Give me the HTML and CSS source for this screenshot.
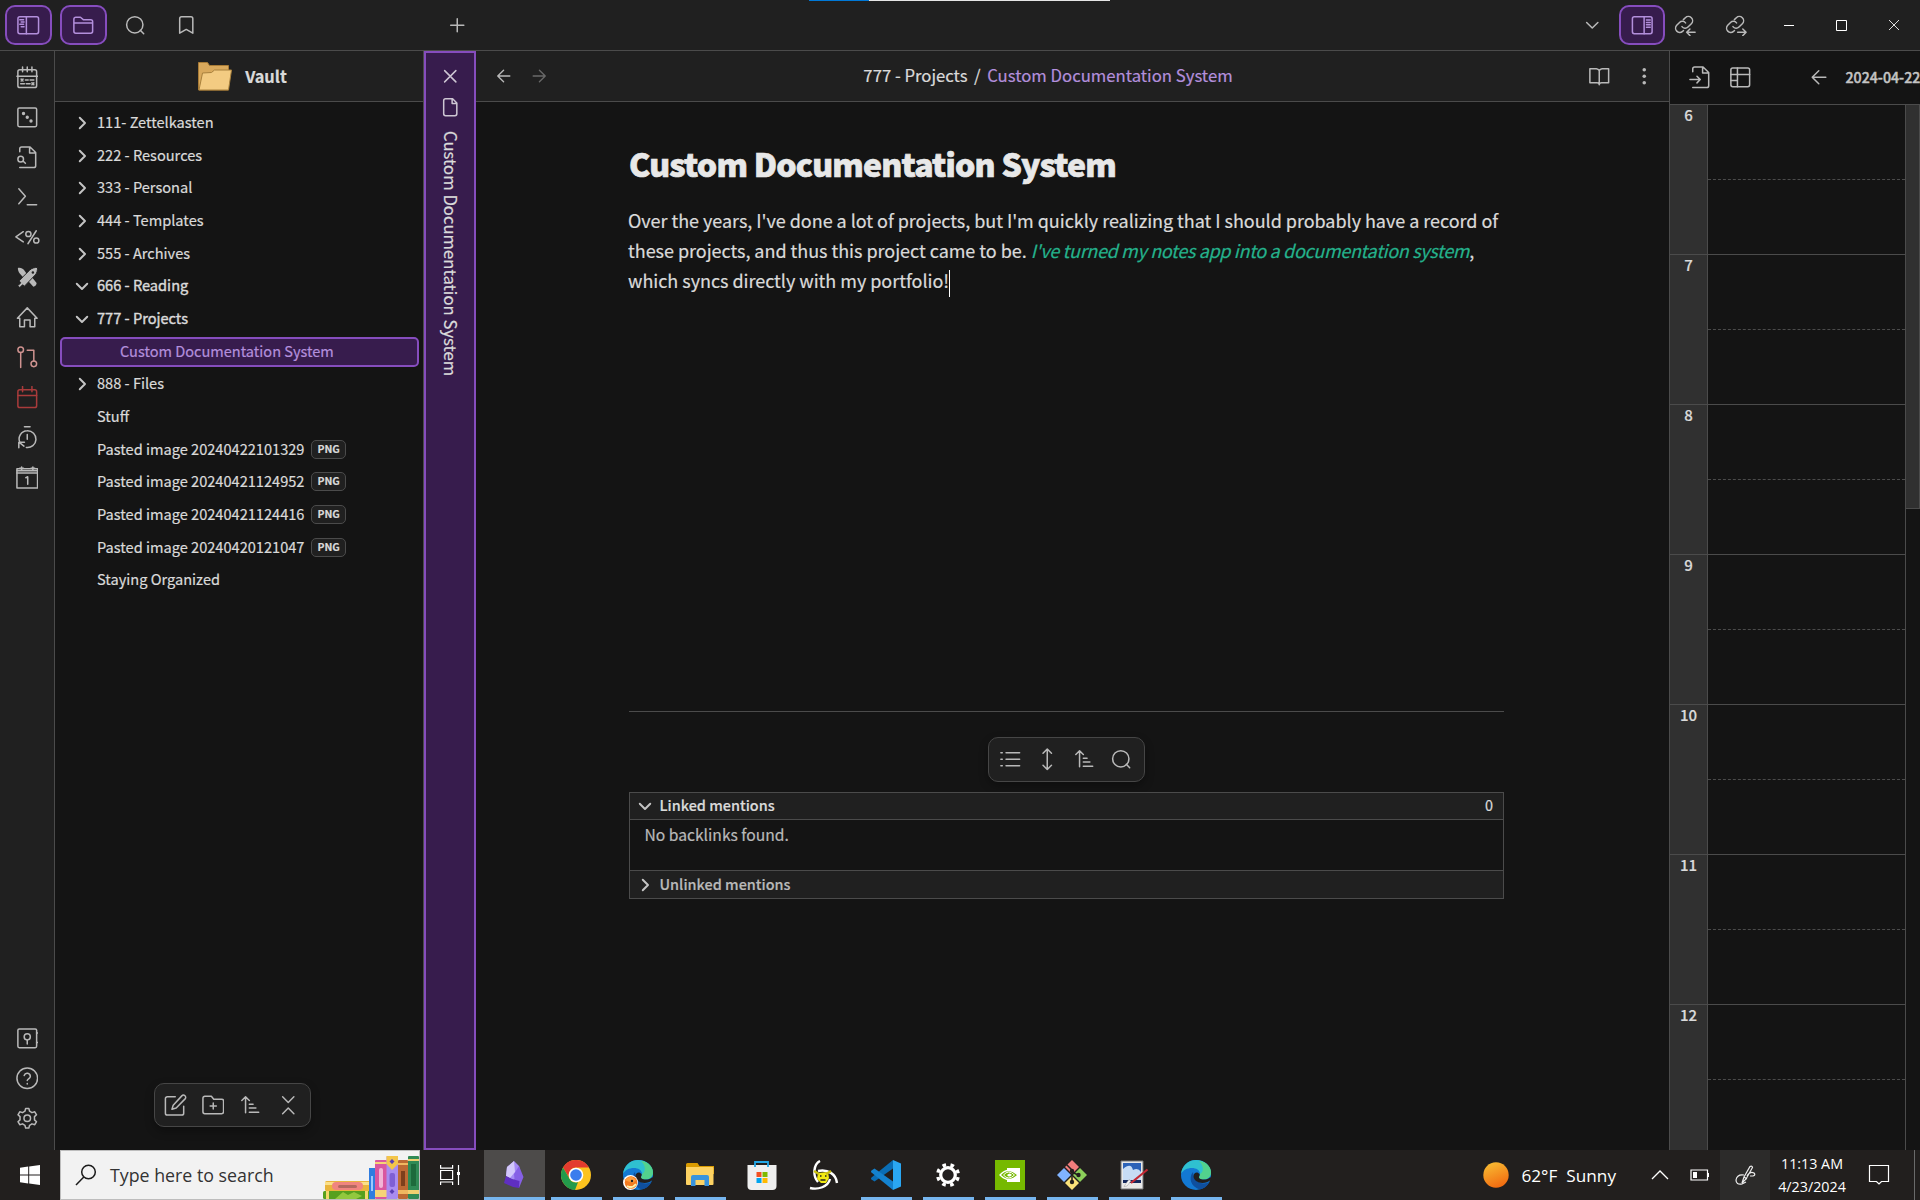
FILE: index.html
```html
<!DOCTYPE html>
<html lang="en">
<head>
<meta charset="utf-8">
<title>Custom Documentation System</title>
<link rel="stylesheet" href="styles.css">
</head>
<body>
<svg class="sprite" aria-hidden="true">
  <symbol id="search" viewBox="0 0 24 24"><circle cx="11.5" cy="11.5" r="8.7"/><path d="m21 21-3.6-3.6"/></symbol>
  <symbol id="left" viewBox="0 0 24 24"><path d="M19 12H4.500M11.500 5l-7 7 7 7"/></symbol>
  <symbol id="right" viewBox="0 0 24 24"><path d="M5 12h14.500M12.500 5l7 7-7 7"/></symbol>
  <symbol id="chev" viewBox="0 0 24 24"><path d="m9 5 7 7-7 7"/></symbol>
  <symbol id="sort" viewBox="0 0 24 24"><path d="M7 20V3M3 7l4-4 4 4M11 11h4M11 15h7M11 19.500h10"/></symbol>
</svg>

<div class="app">
  <header class="titlebar">
    <div class="tab-icons">
      <span class="pill"><svg class="i" viewBox="0 0 24 24"><rect x="1" y="3" width="22" height="18" rx="2"/><path d="M10 3v18M3 6h4M4.500 8.500h3M3 11h4M4.500 13.500h3"/></svg></span>
      <span class="pill"><svg class="i" viewBox="0 0 24 24"><path d="M2 9.500h20M4 20.500h16a2 2 0 0 0 2-2V8a2 2 0 0 0-2-2h-8L9 3.500H4a2 2 0 0 0-2 2v13a2 2 0 0 0 2 2Z"/></svg></span>
      <span class="ti"><svg class="i"><use href="#search"/></svg></span>
      <span class="ti"><svg class="i" viewBox="0 0 24 24"><path d="M19 20.500l-7-4-7 4V5a2 2 0 0 1 2-2h10a2 2 0 0 1 2 2z"/></svg></span>
    </div>
    <svg class="i plus" viewBox="0 0 24 24"><path d="M5 12h14M12 5v14"/></svg>
    <div class="notch"></div>
    <div class="win-icons">
      <span class="w-chev"><svg class="i" viewBox="0 0 24 24"><path d="m6 9 6 6 6-6"/></svg></span>
      <span class="pill pill-r"><svg class="i" viewBox="0 0 24 24"><rect x="1.500" y="3" width="21" height="18" rx="2"/><path d="M14 3v18M16.500 6.500h4M16.500 9h4M16.500 11.500h4M16.500 14h4"/></svg></span>
      <span class="w-link"><svg class="i" viewBox="0 0 24 24"><path d="M8.500 13.500a4.200 4.200 0 0 0 6.400.4l3.600-3.600a4.500 4.500 0 0 0-6.400-6.400L10 6"/><path d="M12.300 9.500a4.200 4.200 0 0 0-6.400-.4l-3 3a4.500 4.500 0 0 0 6.200 6.500l1-1M22.500 19.500h-9M17 16l-3.500 3.500L17 23"/></svg></span>
      <span class="w-link2"><svg class="i" viewBox="0 0 24 24"><path d="M8.500 13.500a4.200 4.200 0 0 0 6.400.4l3.600-3.600a4.500 4.500 0 0 0-6.400-6.400L10 6"/><path d="M12.300 9.500a4.200 4.200 0 0 0-6.400-.4l-3 3a4.500 4.500 0 0 0 6.200 6.500l1-1M13.500 19.500h9M19 16l3.500 3.500L19 23"/></svg></span>
      <span class="win"><svg width="12" height="12" viewBox="0 0 12 12"><path d="M1 6.500h10" stroke="#fff"/></svg></span>
      <span class="win"><svg width="12" height="12" viewBox="0 0 12 12"><path d="M1.500 1.500h10v10h-10z" stroke="#fff"/></svg></span>
      <span class="win"><svg width="12" height="12" viewBox="0 0 12 12"><path d="m1 1 10 10M11 1 1 11" stroke="#ddd"/></svg></span>
    </div>
  </header>

  <div class="workspace">
    <nav class="ribbon">
      <div class="rib">
        <span><svg class="i" viewBox="0 0 24 24"><rect x="2" y="4" width="20" height="19" rx="2"/><path d="M7 1v5M12 1v5M17 1v5M1 11h22M5.500 14l2 2M7.500 14l-2 2M10 15h3M15 15h4M5 19h4M11 19h4M17 18l2 2M19 18l-2 2"/></svg></span>
        <span><svg class="i" viewBox="0 0 24 24"><rect x="2" y="2" width="20" height="20" rx="1.500"/><g fill="currentColor"><circle cx="8" cy="8" r="1"/><circle cx="12" cy="12" r="1"/><circle cx="16" cy="16" r="1"/></g></svg></span>
        <span><svg class="i" viewBox="0 0 24 24"><path d="M4 6V3a2 2 0 0 1 2-2h9l6 6v14a2 2 0 0 1-2 2H4M14.500 1v6.500H21"/><circle cx="5" cy="14" r="3"/><path d="m8 16.500 2 2"/></svg></span>
        <span><svg class="i" viewBox="0 0 24 24"><path d="m3 3 7 8-7 8M12 20h10"/></svg></span>
        <span><svg class="i tall" viewBox="0 0 28 24"><path d="M10 6 2 11.500 10 17M24 5 15 19"/><circle cx="15.500" cy="8.500" r="2.800"/><circle cx="24" cy="15.500" r="2.800"/></svg></span>
        <span><svg class="i solid" viewBox="0 0 24 24"><path d="M2 2c3.500-.5 6 1 7.500 3.500L12 9l-3.500 4L4 8C2.500 6 2 4 2 2zM13 16l4-4 5 6c0 2-1.500 3.500-3.500 4z"/><path d="M15 4c2-2 5-2.500 8-2.500 0 3-.5 6-2.500 8L9 21.500 7 20l-3 3-2-2 3-3-1.500-2z" stroke="#202020" stroke-width="1"/><circle cx="18" cy="7" r="1.300" fill="#202020"/></svg></span>
        <span><svg class="i" viewBox="0 0 24 24"><path d="M1.500 13 12 2l10.500 11H20v9h-5v-7H9v7H4v-9z"/></svg></span>
        <span class="pink"><svg class="i" viewBox="0 0 24 24"><circle cx="5" cy="4" r="3"/><circle cx="19" cy="19" r="3"/><path d="M5 7v16M12 4.500h7V16"/></svg></span>
        <span class="red"><svg class="i" viewBox="0 0 24 24"><rect x="2" y="4" width="20" height="19" rx="2"/><path d="M7 .5V6M17 .5V6M2 10h20"/></svg></span>
        <span><svg class="i" viewBox="0 0 24 24"><path d="M9 .8h6M12 9v5M4.500 18A8.700 8.700 0 0 1 12 5a9 9 0 1 1-1 17.900M3 23.200v-6h6M3.500 17.500l5 4"/></svg></span>
        <span><svg class="i" viewBox="0 0 24 24"><rect x="1" y="3" width="22" height="20.500"/><path d="M1 7.500h22M6 1v4M18 1v4M4 2.500h4M16 2.500h4M1 5h22M10.500 12.500l2-1v8"/></svg></span>
      </div>
      <div class="rib">
        <span><svg class="i" viewBox="0 0 24 24"><rect x="2" y="2" width="20" height="20" rx="1.500"/><circle cx="12" cy="10.500" r="3.300"/><path d="M12 14v4M23.200 6.500H22M23.200 16.500H22"/></svg></span>
        <span><svg class="i" viewBox="0 0 24 24"><circle cx="12" cy="12" r="11"/><path d="M8.700 9a3.400 3.400 0 0 1 6.600 1c0 2.300-3.300 2.700-3.300 4.300M12 17.500v.5"/></svg></span>
        <span><svg class="i" viewBox="0 0 24 24"><circle cx="12" cy="12" r="3.500"/><path d="M9.500 4.500 10.300 1.500h3.400l.8 3L17 6l3-.9 1.900 3.200-2.200 2v3.400l2.200 2-1.900 3.200L17 18l-2.500 1.500-.8 3h-3.400l-.8-3L7 18l-3 .9-1.900-3.200 2.200-2v-3.400l-2.200-2L4 5.100 7 6z"/></svg></span>
      </div>
    </nav>

    <aside class="sidebar">
      <div class="vault-head">
        <svg width="34" height="29" viewBox="0 0 34 29"><path d="M.5 28V.5h9l2 3h19V28z" fill="#d9a95c" stroke="#a87b36"/><path d="m1 28 3.500-17 9-.5 3-2.500H33.500L30.500 28z" fill="#f3cb82" stroke="#a8803c"/></svg>
        <span>Vault</span>
      </div>
      <div class="tree">
        <div class="row"><svg class="c"><use href="#chev"/></svg><span>111- Zettelkasten</span></div>
        <div class="row"><svg class="c"><use href="#chev"/></svg><span>222 - Resources</span></div>
        <div class="row"><svg class="c"><use href="#chev"/></svg><span>333 - Personal</span></div>
        <div class="row"><svg class="c"><use href="#chev"/></svg><span>444 - Templates</span></div>
        <div class="row"><svg class="c"><use href="#chev"/></svg><span>555 - Archives</span></div>
        <div class="row open"><svg class="c down"><use href="#chev"/></svg><span>666 - Reading</span></div>
        <div class="row open"><svg class="c down"><use href="#chev"/></svg><span>777 - Projects</span></div>
        <div class="row active"><span>Custom Documentation System</span></div>
        <div class="row"><svg class="c"><use href="#chev"/></svg><span>888 - Files</span></div>
        <div class="row leaf"><span>Stuff</span></div>
        <div class="row leaf"><span>Pasted image 20240422101329</span><b>PNG</b></div>
        <div class="row leaf"><span>Pasted image 20240421124952</span><b>PNG</b></div>
        <div class="row leaf"><span>Pasted image 20240421124416</span><b>PNG</b></div>
        <div class="row leaf"><span>Pasted image 20240420121047</span><b>PNG</b></div>
        <div class="row leaf"><span>Staying Organized</span></div>
      </div>
      <div class="toolbar side-tools">
        <svg class="i" viewBox="0 0 24 24"><path d="M12 3H3.500a2 2 0 0 0-2 2v15.500a2 2 0 0 0 2 2H19a2 2 0 0 0 2-2V13M19 2a2.300 2.300 0 0 1 3.500 3.200L13 15l-4.500 1.300L9.800 12z"/></svg>
        <svg class="i" viewBox="0 0 24 24"><path d="M12 9.500v6.500M8.700 12.800h6.600M3 21h18a2 2 0 0 0 2-2V7.500a2 2 0 0 0-2-2h-8.500L10 2.500H3a2 2 0 0 0-2 2V19a2 2 0 0 0 2 2Z"/></svg>
        <svg class="i"><use href="#sort"/></svg>
        <svg class="i" viewBox="0 0 24 24"><path d="m6 3 6 6 6-6M6 21l6-6 6 6"/></svg>
      </div>
    </aside>

    <section class="stacked-tab">
      <svg class="i" viewBox="0 0 24 24"><path d="m6 6 12 12M18 6 6 18"/></svg>
      <svg class="i file" viewBox="0 0 24 24"><path d="M14.500 3H7a2 2 0 0 0-2 2v14a2 2 0 0 0 2 2h10a2 2 0 0 0 2-2V7.500zM14 3v5h5"/></svg>
      <span>Custom Documentation System</span>
    </section>

    <main class="note">
      <div class="note-head">
        <div class="nav"><svg class="i s"><use href="#left"/></svg><svg class="i s dim"><use href="#right"/></svg></div>
        <div class="crumbs"><span>777 - Projects</span><i>/</i><em>Custom Documentation System</em></div>
        <div class="acts">
          <svg class="i" viewBox="0 0 24 24"><path d="M12 6v15M12 6a4 4 0 0 0-3-2H2v15h7.500c1.500 0 2.500 1 2.500 2 0-1 1-2 2.500-2H22V4h-7a4 4 0 0 0-3 2z"/></svg>
          <svg class="i solid" viewBox="0 0 24 24"><circle cx="12" cy="5" r="1.900"/><circle cx="12" cy="12" r="1.900"/><circle cx="12" cy="19" r="1.900"/></svg>
        </div>
      </div>
      <div class="doc">
        <h1>Custom Documentation System</h1>
        <div class="para">
          <div>Over the years, I've done a lot of projects, but I'm quickly realizing that I should probably have a record of</div>
          <div>these projects, and thus this project came to be. <em>I've turned my notes app into a documentation system</em>,</div>
          <div>which syncs directly with my portfolio!<i class="caret"></i></div>
        </div>
        <div class="backlinks">
          <div class="toolbar main-tools">
            <svg class="i" viewBox="0 0 24 24"><path d="M7.500 5H22M7.500 12H22M7.500 19H22M2 5h1.500M2 12h1.500M2 19h1.500"/></svg>
            <svg class="i" viewBox="0 0 24 24"><path d="M12 1v22M7.500 5.500 12 1l4.500 4.500M7.500 18.500 12 23l4.500-4.500"/></svg>
            <svg class="i"><use href="#sort"/></svg>
            <svg class="i"><use href="#search"/></svg>
          </div>
          <div class="mentions">
            <div class="mh on"><svg class="c down"><use href="#chev"/></svg><span>Linked mentions</span><u>0</u></div>
            <div class="mb">No backlinks found.</div>
            <div class="mh"><svg class="c"><use href="#chev"/></svg><span>Unlinked mentions</span></div>
          </div>
        </div>
      </div>
    </main>

    <aside class="planner">
      <div class="plan-head">
        <svg class="i" viewBox="0 0 24 24"><path d="M4 6V3a2 2 0 0 1 2-2h9l6 6v14a2 2 0 0 1-2 2H4M14.500 1v6.500H21M1 14.500h11M8.500 11l3.500 3.500L8.500 18"/></svg>
        <svg class="i" viewBox="0 0 24 24"><rect x="2" y="2" width="20" height="20" rx="2"/><path d="M9 2v20M2 9h20M2 15.500h7"/></svg>
        <svg class="i la"><use href="#left"/></svg>
        <span>2024-04-22</span>
      </div>
      <div class="plan-body">
        <div class="hours">
          <div class="hr"><b>6</b><i></i></div><div class="hr"><b>7</b><i></i></div><div class="hr"><b>8</b><i></i></div><div class="hr"><b>9</b><i></i></div><div class="hr"><b>10</b><i></i></div><div class="hr"><b>11</b><i></i></div><div class="hr"><b>12</b><i></i></div>
        </div>
        <div class="scroll"><div class="thumb"></div></div>
      </div>
    </aside>
  </div>

  <footer class="taskbar">
    <div class="start"><svg width="20" height="20" viewBox="0 0 20 20"><path fill="#fff" d="M0 2.700 8.200 1.600v7.900H0zM9.200 1.400 20 0v9.500H9.200zM0 10.500h8.200v7.900L0 17.300zM9.200 10.500H20V20L9.200 18.600z"/></svg></div>
    <div class="searchbox">
      <svg width="22" height="22" viewBox="0 0 22 22" fill="none" stroke="#1b1b1b" stroke-width="1.500"><circle cx="13.500" cy="8" r="6.800"/><path d="M8.800 13 1 21"/></svg>
      <span>Type here to search</span>
      <svg class="books" width="96" height="43" viewBox="0 0 96 43">
        <rect x="2" y="25" width="45" height="10" rx="1.500" fill="#e9b53c"/><rect x="2" y="26" width="45" height="3" fill="#fbe08a"/><rect x="9" y="26" width="31" height="8" rx="4" fill="#f0857f"/><rect x="15" y="29" width="19" height="3" rx="1.500" fill="#b5685f"/>
        <rect y="35" width="47" height="8" rx="1.500" fill="#56a01e"/><path d="M3 35h3v8H3zM42 35h3v8h-3z" fill="#f2d86a"/><path d="m12 43 8-7 5 3 6-3 8 4-6 3z" fill="#92c83e"/>
        <rect x="46" y="12" width="6" height="31" fill="#2f7de0"/><rect x="48" y="20" width="2" height="15" fill="#9cc8ff"/>
        <rect x="52" y="4" width="12" height="39" rx="1" fill="#d9579f"/><path d="M52 6h12v2H52zM52 34h12v7H52z" fill="#f6d377"/><rect x="56" y="12" width="4" height="20" rx="2" fill="#f2b4d6"/>
        <rect x="63.500" width="11.500" height="43" rx="1" fill="#a98cf0"/><path d="M63.500 0H75v8l-6 6-5.500-6z" fill="#f3c54a"/><path d="m69 3 2.500 2.500L69 8l-2.500-2.500zM69 33l2.500 2.500L69 38l-2.500-2.500z" fill="#5b3fb5"/><rect x="66.500" y="17" width="5.500" height="14" rx="2" fill="#7f5fd4"/>
        <rect x="75" y="4" width="10" height="39" rx="1" fill="#bd6a34"/><path d="M75 7h10v2H75zM75 34h10v4H75z" fill="#f0b860"/><rect x="78" y="15" width="4" height="15" fill="#7d3f1c"/>
        <rect x="85" width="11" height="43" rx="1" fill="#2f8a55"/><path d="M85 3h11v2H85zM85 34h11v4H85z" fill="#f0d070"/><rect x="88" y="8" width="5" height="22" fill="#1d6a3c"/>
      </svg>
    </div>
    <div class="taskview"><svg width="20" height="20" viewBox="0 0 20 20" fill="none" stroke="#fff" stroke-width="1.200"><path d="M.6 0v3.200h12V0M.6 5.500h12v9H.6zM.6 20v-3h12v3M18.500 0v20"/><path d="M17 7h3v3h-3z" fill="#fff" stroke="none"/></svg></div>
    <div class="apps">
      <div class="app-i cur run"><svg width="22" height="28" viewBox="0 0 22 28"><path d="M11 0 4 6l-1 9 7 4 9-2-3-12z" fill="#a58af5"/><path d="M11 0 4 6l-1 9 4 2 5-6z" fill="#d3c8fb"/><path d="m16 5 4.500 11L16 27l-4-4-1-10z" fill="#8660e6"/><path d="M3 15 1 22l9 4 6 1 .5-7L9 18z" fill="#5f2fc0"/></svg></div>
      <div class="app-i run"><svg width="30" height="30" viewBox="0 0 30 30"><circle cx="15" cy="15" r="15" fill="#fcc31e"/><path d="M2 7.500A15 15 0 0 1 28 7.500H15A7.500 7.500 0 0 0 8.500 18.500z" fill="#e33b2e"/><path d="M2 7.500 8.500 18.700A7.500 7.500 0 0 0 17 22.200L14 30A15 15 0 0 1 2 7.500z" fill="#239a4b"/><circle cx="15" cy="15" r="7.300" fill="#fff"/><circle cx="15" cy="15" r="5.800" fill="#3b7ded"/></svg></div>
      <div class="app-i run"><svg width="30" height="30" viewBox="0 0 30 30"><use href="#edge"/><circle cx="7.500" cy="22.500" r="7.500" fill="#fff"/><circle cx="8" cy="22.500" r="6.300" fill="#f47b20"/><path d="m1 20 7-4 5 4-3 3z" fill="#ff9d3c"/><circle cx="9" cy="21" r="1.200" fill="#222"/><path d="M4 26q5 3 9-2" stroke="#fff1a8" stroke-width="2" fill="none"/></svg></div>
      <div class="app-i run"><svg width="28" height="24" viewBox="0 0 28 24"><path d="M0 1.500Q0 0 1.500 0h10l2 3H28v8H0z" fill="#d99a00"/><path d="M0 4h26.500q1 0 1 1v16q0 1-1 1H1q-1 0-1-1z" fill="#fdd263"/><path d="M5 23V14q0-2 2-2h14q2 0 2 2v9h-4.500v-6h-9v6z" fill="#3a94dc"/></svg></div>
      <div class="app-i"><svg width="30" height="30" viewBox="0 0 30 30"><path d="M8 5.500V2h13v3.500" fill="none" stroke="#23a6e6" stroke-width="1.800"/><path d="M.5 5h29v21q0 4-4 4h-21q-4 0-4-4z" fill="#efefef"/><path d="M8 5v2M21 5v2" stroke="#23a6e6" stroke-width="1.800"/><path d="M9.500 12h5v5h-5z" fill="#f25022"/><path d="M15.500 12h5v5h-5z" fill="#7fba00"/><path d="M9.500 18h5v5h-5z" fill="#00a4ef"/><path d="M15.500 18h5v5h-5z" fill="#ffb900"/></svg></div>
      <div class="app-i"><svg width="30" height="30" viewBox="0 0 30 30" fill="none" stroke="#fff" stroke-width="2.400"><path d="M11 1C5 4 3 15 9 22M28 23C27 14 19 9 9 11M1 28C9 30 19 27 21 19"/><path d="m9 13 10-1 1 6-3 5h-5l-4-4z" fill="#f2ea12" stroke="none"/><path d="m5 11 5 3M22 11l-5 3" stroke="#c9c010"/><path d="M11 16h1.500M16 16h1.500M11.500 20h5" stroke="#222" stroke-width="1.500"/></svg></div>
      <div class="app-i run"><svg width="30" height="30" viewBox="0 0 30 30"><path d="M22 0 30 3.500v23L22 30z" fill="#2aa7f3"/><path d="M22 0v8.500L3.500 21.500.5 19.500q-1-1 0-2z" fill="#0a6db5"/><path d="M22 30v-8.500L3.500 8.500l-3 2q-1 1 0 2z" fill="#1482cf"/></svg></div>
      <div class="app-i run"><svg width="24" height="24" viewBox="0 0 24 24" fill="none" stroke="#fff"><circle cx="12" cy="12" r="7.300" stroke-width="3.200"/><circle cx="12" cy="12" r="10.300" stroke-width="3.400" stroke-dasharray="3.600 4.490" stroke-dashoffset="-2.200"/></svg></div>
      <div class="app-i run"><svg width="30" height="30" viewBox="0 0 30 30"><path d="M0 0h30v30H0z" fill="#76b900"/><path d="M12 8h13v14H12z" fill="#fff"/><path d="M5 15q8-9 18 0-9 9-18 0z" fill="#76b900" stroke="#fff" stroke-width="1.300"/><path d="M8.500 15q5-6 11 0-6 6-11 0z" fill="#76b900" stroke="#fff"/><path d="M12 15q3-3 5 0-3 3-5 0z" fill="#fff"/></svg></div>
      <div class="app-i run"><svg width="30" height="30" viewBox="0 0 30 30"><path d="m15 0 7 7-7 7-7-7z" fill="#f27d7d"/><path d="m7 8 7 7-7 7-7-7z" fill="#80b3ff"/><path d="m23 8 7 7-7 7-7-7z" fill="#8ccf5a"/><path d="m15 16 7 7-7 7-7-7z" fill="#fbe27a"/><path d="m9 4 6 6v12M15 12l6 3" stroke="#231f1e" stroke-width="1.500" fill="none"/><circle cx="15" cy="11" r="2.200" fill="#231f1e"/><circle cx="21.500" cy="15" r="2.200" fill="#231f1e"/><circle cx="15" cy="22" r="2.200" fill="#231f1e"/></svg></div>
      <div class="app-i run pair"><svg width="30" height="30" viewBox="0 0 30 30"><path d="M2 1h22v28H2z" fill="#e8e8e8" stroke="#777"/><path d="M4 3h18v20H4z" fill="#2c62b8"/><path d="M4 9q8-7 10 1 5-3 8 2v8H4z" fill="#c7dcf5"/><path d="M4 20h18v3H4z" fill="#14285c"/><path d="M28.500 9.500 12 23" stroke="#c42834" stroke-width="2.200"/><path d="m12 21-4 5-3 .5 2-3 3-4z" fill="#f5f5f5" stroke="#999" stroke-width=".5"/></svg></div>
      <div class="app-i run"><svg width="30" height="30" viewBox="0 0 30 30"><g id="edge"><circle cx="15" cy="15" r="15" fill="#1379d3"/><path d="M0 14C1 6 7 0 15 0c9 0 15 6 15 12.500 0 4-3 7-7.500 7-3 0-4.500-1-4.500-2s1-1.500 1-3.500C19 10 15 8 11 8 6 8 2 10 0 14z" fill="#2fc0d0"/><path d="M18 1c8 1 12 6.500 12 11.500 0 4-3 7-7.500 7-3 0-4.500-1-4.500-2s1-1.500 1-3.500c4-2 4-8-1-13z" fill="#5bd67c" opacity=".8"/><path d="M12 12c-5 6-2 15 7 17.500 4-1 7.500-3.500 9.500-7.500-5 3-16 2-16.500-10z" fill="#0f4f9e"/><path d="M18.500 14c-2-3-6-1.500-6 2 0 4 4 7 9 7 3 0 6-1 8-3l1-1-1-2c-3 3-7 3-10 2-1.500-.5-1.500-1.500-1.500-2 0-1 1-1.500.5-3z" fill="#221f1e"/></g></svg></div>
    </div>
    <div class="tray">
      <svg width="26" height="26" viewBox="0 0 26 26"><defs><linearGradient id="sun" x1=".2" y1="0" x2=".6" y2="1"><stop offset="0" stop-color="#f8bd33"/><stop offset="1" stop-color="#f26a10"/></linearGradient></defs><circle cx="13" cy="13" r="12.700" fill="url(#sun)"/></svg>
      <span class="wx">62°F</span><span class="wx2">Sunny</span>
      <svg class="up" width="18" height="10" viewBox="0 0 18 10"><path d="m1 9 8-8 8 8" fill="none" stroke="#fff" stroke-width="1.300"/></svg>
      <svg class="bat" width="20" height="12" viewBox="0 0 20 12"><path d="M1 1h16.500v10H1z" fill="none" stroke="#fff" stroke-width="1.200"/><path d="M3 3h4v6H3zM17.500 4h1.500v4h-1.500z" fill="#fff"/></svg>
      <div class="pen"><svg width="21" height="21" viewBox="0 0 21 21" fill="none" stroke="#eee" stroke-width="1.200"><path d="M7 18 9 12 15 1.500q2-1 2.500 1L11 14zM12 11q3-5 7-3 2 2-1 3h-3M9 10q-7-1-8 5 0 5 6 4l4-2M9 12l3 2"/></svg></div>
      <div class="clock"><span>11:13 AM</span><span>4/23/2024</span></div>
      <svg class="chat" width="22" height="22" viewBox="0 0 22 22"><path d="M1.500 1.500h19v16h-7l-2.500 2.500-2.500-2.500h-7z" fill="none" stroke="#fff" stroke-width="1.200"/></svg>
      <div class="peek"></div>
    </div>
  </footer>
</div>
</body>
</html>
```
FILE: styles.css
```css
* { box-sizing: border-box; }
body { margin: 0; background: #141414; color: #dadada; font-family: "Noto Sans CJK SC", "Noto Sans", sans-serif; overflow: hidden; -webkit-text-stroke: .2px currentColor; }
.sprite { position: absolute; width: 0; height: 0; }
.app { width: 1920px; height: 1200px; display: flex; flex-direction: column; }
.i { width: 22.5px; height: 22.5px; fill: none; stroke: currentColor; stroke-width: 1.6; stroke-linecap: round; stroke-linejoin: round; color: #b9b9b9; flex: none; }
.i.solid { fill: currentColor; stroke: none; }
.i.tall { width: 26px; }
.c { width: 18px; height: 18px; fill: none; stroke: #c4c4c4; stroke-width: 2.600; stroke-linecap: round; stroke-linejoin: round; flex: none; }
.c.down { transform: rotate(90deg); }

.titlebar { height: 51px; flex: none; display: flex; align-items: center; background: #202020; border-bottom: 1px solid #4b4b4b; }
.tab-icons { display: flex; align-items: center; padding-left: 5px; width: 446px; }
.pill { width: 47px; height: 40px; border: 2px solid #864dbe; border-radius: 10px; background: #371c4d; display: grid; place-items: center; margin-right: 8px; }
.pill .i { color: #b38fdc; }
.ti { width: 51.500px; display: grid; place-items: center; }
.tab-icons .ti:nth-child(3) { margin-left: -6px; }
.notch { width: 301px; height: 1px; margin-left: 340px; align-self: flex-start; background: linear-gradient(90deg, #0078d7 60px, #e5e5e5 60px); }
.win-icons { display: flex; align-items: center; margin-left: auto; }
.win-icons > span { display: grid; place-items: center; }
.w-chev { width: 53px; }
.win-icons .pill-r { width: 46px; margin: 0; }
.w-link { width: 41px; }
.w-link2 { width: 56.500px; padding-left: 4px; }
.win { width: 52.500px; fill: none; }

.workspace { height: 1099px; display: flex; }
.ribbon { width: 55px; background: #202020; border-right: 1px solid #4b4b4b; display: flex; flex-direction: column; justify-content: space-between; padding: 6.500px 0 11.500px; }
.rib span { height: 40px; display: grid; place-items: center; }
.rib .pink .i { color: #cf9390; }
.rib .red .i { color: #a93b3b; }

.sidebar { width: 369px; border-right: 1px solid #4b4b4b; display: flex; flex-direction: column; }
.vault-head { height: 51px; flex: none; background: #202020; border-bottom: 1px solid #4b4b4b; display: flex; align-items: center; justify-content: center; gap: 13px; font-size: 16.400px; font-weight: 700; line-height: 24px; padding-left: 7px; }
.vault-head span { padding-bottom: 1px; }
.tree { padding: 6px 4px 0 5px; flex: 1; }
.row { height: 30px; margin-bottom: 2.660px; padding-left: 13px; display: flex; align-items: center; gap: 6px; font-size: 14.600px; line-height: 20px; white-space: nowrap; }
.row span { padding-bottom: 2px; }
.row.open { -webkit-text-stroke-width: .4px; }
.row.leaf { padding-left: 37px; gap: 7px; }
.row.active { border: 2px solid #864dbe; border-radius: 5px; background: #371c4d; color: #b38fdc; padding-left: 58px; font-size: 14.550px; }
.row b { font-size: 10.500px; line-height: 16px; padding: 0 5px; margin-bottom: 1px; border: 1px solid #4b4b4b; border-radius: 5px; background: #202020; height: 19px; }
.toolbar { display: flex; align-items: center; background: #202020; border: 1px solid #464646; border-radius: 10px; box-shadow: 0 4px 10px rgba(0,0,0,.3); }
.side-tools { width: 157px; height: 44px; margin: 0 0 23px 99px; padding: 0 9px; gap: 15px; }

.stacked-tab { width: 52px; border: 2px solid #864dbe; background: #371c4d; display: flex; flex-direction: column; align-items: center; padding-top: 11.500px; color: #dadada; }
.stacked-tab .i { color: #cdc6d3; }
.stacked-tab .file { margin: 8.500px 0 12.500px; }
.stacked-tab span { writing-mode: vertical-rl; font-size: 16.700px; line-height: 24px; white-space: nowrap; margin-left: 2px; }

.note { width: 1193px; display: flex; flex-direction: column; }
.note-head { height: 51px; flex: none; background: #202020; border-bottom: 1px solid #4b4b4b; display: grid; grid-template-columns: 120px 1fr 120px; align-items: center; }
.nav { display: flex; gap: 15px; padding-left: 18px; }
.i.s { width: 20px; height: 20px; }
.i.dim { color: #696969; }
.crumbs { display: flex; justify-content: center; gap: 6.500px; font-size: 16.720px; line-height: 24px; white-space: nowrap; padding: 0 49px 2px 0; }
.crumbs i, .crumbs em { font-style: normal; }
.crumbs em { color: #b38fdc; }
.acts { display: flex; justify-content: flex-end; gap: 22px; padding-right: 14px; }
.doc { width: 875px; margin-left: 153px; }
h1 { margin: 0; padding-top: 38px; font-size: 32px; line-height: 46px; font-weight: 900; letter-spacing: -.8px; color: #e8e8e8; white-space: nowrap; -webkit-text-stroke-width: .7px; }
.para { margin: 19px 0 0 -1px; font-size: 18px; line-height: 30px; letter-spacing: -.035px; white-space: nowrap; height: 506px; }
.para em { color: #24b28c; letter-spacing: -.33px; }
.caret { display: inline-block; width: 1px; height: 27px; background: #fff; vertical-align: middle; }
.backlinks { border-top: 1px solid #4b4b4b; padding-top: 25px; }
.main-tools { width: 157px; height: 45px; margin: 0 auto 10px; padding: 0 9.500px; gap: 14.800px; }
.mentions { border: 1px solid #4b4b4b; }
.mh { height: 27px; background: #202020; display: flex; align-items: center; padding: 0 10px 0 5.500px; gap: 6px; font-size: 14.450px; line-height: 20px; font-weight: 500; color: #b9b9b9; }
.mh span, .mh u { padding-bottom: 2px; }
.mh.on { color: #dadada; border-bottom: 1px solid #4b4b4b; }
.mh u { text-decoration: none; margin-left: auto; font-weight: 400; }
.mb { height: 51px; border-bottom: 1px solid #4b4b4b; padding: 3px 14.500px; font-size: 15.650px; line-height: 24px; color: #b9b9b9; }

.planner { flex: 1; border-left: 1px solid #4b4b4b; display: flex; flex-direction: column; overflow: hidden; }
.plan-head { height: 54px; flex: none; border-bottom: 1px solid #4b4b4b; display: flex; align-items: center; padding-left: 19px; gap: 17px; font-size: 14.200px; font-weight: 500; line-height: 20px; white-space: nowrap; color: #c4c4c4; -webkit-text-stroke-width: .4px; }
.plan-head .la { margin-left: 40px; }
.plan-head span { margin-left: -2px; padding-bottom: 2px; }
.plan-body { flex: 1; display: flex; min-height: 0; }
.hours { width: 236px; border-right: 1px solid #4b4b4b; overflow: hidden; }
.hr { height: 150px; border-bottom: 1px solid #4b4b4b; display: flex; }
.hr b { width: 38px; background: #303030; border-right: 1px solid #4b4b4b; text-align: center; font-weight: 500; font-size: 15px; line-height: 20px; }
.hr i { flex: 1; height: 75px; border-bottom: 1px dashed #4b4b4b; }
.scroll { flex: 1; }
.thumb { height: 404px; background: #303030; border-right: 1px solid #4b4b4b; border-bottom: 1px solid #4b4b4b; }

.taskbar { height: 50px; flex: none; background: #221f1e; display: flex; font-family: "Open Sans", "Noto Sans", sans-serif; color: #fff; -webkit-text-stroke-width: 0; }
.start { width: 60px; display: grid; place-items: center; }
.searchbox { width: 360px; height: 50px; background: #f2f2f2; border: 1px solid #bdbdbd; display: flex; align-items: center; padding-left: 14px; color: #333; font-size: 17.800px; white-space: nowrap; overflow: hidden; }
.searchbox span { margin-left: 13px; }
.books { margin-left: auto; align-self: flex-end; flex: none; }
.taskview { width: 60px; display: grid; place-items: center; }
.apps { display: flex; padding-left: 4px; }
.app-i { width: 51px; height: 50px; margin-right: 11px; padding-right: 1px; display: grid; place-items: center; border-bottom: 3px solid transparent; padding-top: 2px; }
.app-i.run { border-bottom-color: #76b5ee; }
.app-i.cur { width: 61px; margin-right: 6px; background: #4d4b4a; }
.tray { margin-left: auto; display: flex; align-items: center; white-space: nowrap; font-size: 17.200px; }
.wx { margin-left: 12px; }
.wx2 { margin-left: 9px; }
.up { margin-left: 35px; }
.bat { margin: 0 10px 0 21px; }
.pen { width: 50px; height: 50px; background: #2c2b2a; display: grid; place-items: center; }
.clock { width: 84px; text-align: center; font-size: 14.300px; line-height: 23px; display: flex; flex-direction: column; padding-bottom: 1px; }
.chat { margin-left: 14px; }
.peek { width: 1px; height: 50px; background: #6a6a6a; margin: 0 5px 0 24px; }
```
